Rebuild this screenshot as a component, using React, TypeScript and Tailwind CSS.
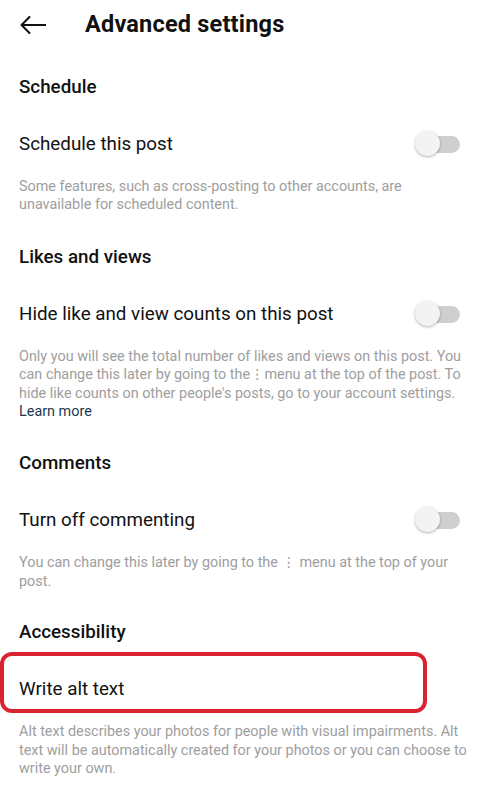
import React from 'react';

const font = { fontFamily: 'Roboto, "Noto Sans", "DejaVu Sans", sans-serif' };

function Toggle() {
  return (
    <div className="relative h-[26px] w-[46px]">
      <div className="absolute left-[4px] top-[5px] h-[17px] w-[41px] rounded-full bg-[#cfcfcf]" />
      <div className="absolute left-0 top-0 h-[25px] w-[25px] rounded-full bg-[#f3f3f3] shadow-[0_1px_3px_rgba(0,0,0,0.3)]" />
    </div>
  );
}

function SectionHeader({ title }: { title: string }) {
  return (
    <div className="flex h-[50px] items-center px-[19px] text-[18.8px] font-medium text-[#111]">
      {title}
    </div>
  );
}

function Row({ label, toggle = true }: { label: string; toggle?: boolean }) {
  return (
    <div className="flex h-[64px] items-center justify-between pl-[19px] pr-[24px] text-[18.8px] text-[#111]">
      <span>{label}</span>
      {toggle && <Toggle />}
    </div>
  );
}

function Desc({ children }: { children: React.ReactNode }) {
  return (
    <p className="mt-[2px] pl-[19px] pr-[12px] text-[14.4px] leading-[18.4px] text-[#9e9e9e]">{children}</p>
  );
}

export default function App() {
  return (
    <div className="min-h-screen w-[485px] bg-white" style={font}>
      <header className="flex h-[50px] items-center">
        <svg width="26" height="18" viewBox="0 0 26 18" className="ml-[20px]" fill="none">
          <path d="M1.5 9H25.5M9.5 1L1.5 9L9.5 17" stroke="#111" strokeWidth="2" strokeLinecap="round" strokeLinejoin="round" />
        </svg>
        <h1 className="ml-[39px] text-[23.5px] font-bold tracking-[0.2px] text-[#111]">Advanced settings</h1>
      </header>

      <div className="pt-[12px]">
        <SectionHeader title="Schedule" />
        <Row label="Schedule this post" />
        <Desc>Some features, such as cross-posting to other accounts, are unavailable for scheduled content.</Desc>
      </div>

      <div className="pt-[17px]">
        <SectionHeader title="Likes and views" />
        <Row label="Hide like and view counts on this post" />
        <Desc>
          Only you will see the total number of likes and views on this post. You can change this later by going to the
          {'\u22EE'}menu at the top of the post. To hide like counts on other people's posts, go to your account settings.{' '}
          <span className="text-[#1d3a4c]">Learn more</span>
        </Desc>
      </div>

      <div className="pt-[17px]">
        <SectionHeader title="Comments" />
        <Row label="Turn off commenting" />
        <Desc>You can change this later by going to the {'\u22EE'} menu at the top of your post.</Desc>
      </div>

      <div className="pt-[16px]">
        <SectionHeader title="Accessibility" />
        <div className="relative">
          <Row label="Write alt text" toggle={false} />
          <div className="absolute left-0 top-[-5px] bottom-[8px] w-[427px] rounded-[12px] border-[4px] border-[#d92330]" />
        </div>
        <Desc>
          Alt text describes your photos for people with visual impairments. Alt text will be automatically created for your
          photos or you can choose to write your own.
        </Desc>
      </div>
    </div>
  );
}
